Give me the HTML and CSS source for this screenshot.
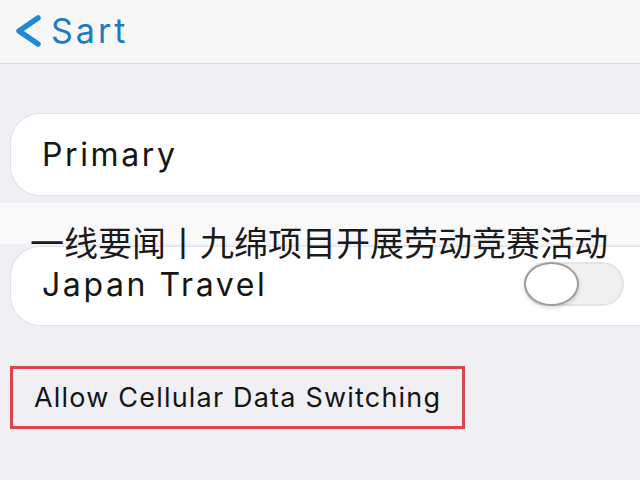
FILE: index.html
```html
<!DOCTYPE html>
<html lang="zh-CN">
<head>
  <meta charset="UTF-8">
  <meta name="viewport" content="width=device-width, initial-scale=1.0">
  <title>一线要闻丨九绵项目开展劳动竞赛活动</title>
  <link rel="stylesheet" href="styles.css">
</head>
<body>

  <!-- Navigation Bar -->
  <header class="nav-bar">
    <a class="back-link" href="#">
      <svg class="back-chevron" width="28" height="32" viewBox="0 0 28 32">
        <path d="M24 3 L5 16 L24 29" fill="none" stroke="#1e8ad6" stroke-width="5.5" stroke-linecap="round" stroke-linejoin="round"/>
      </svg>
      <span>Sart</span>
    </a>
  </header>

  <main class="settings">
    <!-- Line picker -->
    <div class="cell">
      <span class="cell-label">Primary</span>
    </div>

    <!-- Headline banner -->
    <div class="headline">
      <h1>一线要闻丨九绵项目开展劳动竞赛活动</h1>
    </div>

    <!-- Toggle row -->
    <div class="cell cell-toggle">
      <span class="cell-label">Japan Travel</span>
      <span class="switch"><span class="switch-knob"></span></span>
    </div>

    <!-- Highlighted option -->
    <div class="option-box">Allow Cellular Data Switching</div>
  </main>

</body>
</html>
```

FILE: styles.css
```css
/* Global Styles */
body {
  font-family: Inter, "Liberation Sans", sans-serif;
  background-color: #efeff4;
  color: #111;
  margin: 0;
  padding: 0;
  overflow: hidden;
}

/* Navigation Bar */
.nav-bar {
  height: 63px;
  background-color: #f7f7f7;
  border-bottom: 1px solid #dadada;
  display: flex;
  align-items: center;
  padding-left: 14px;
}

.back-link {
  display: flex;
  align-items: center;
  gap: 9px;
  text-decoration: none;
  color: #1b7dc0;
  font-size: 34px;
  letter-spacing: 3px;
  margin-top: -2px;
}

/* Cells */
.settings {
  display: flex;
  flex-direction: column;
}

.cell {
  margin-left: 10px;
  height: 83px;
  margin-top: 49px;
  background-color: #ffffff;
  border: 1px solid #e2e2e6;
  border-right: none;
  border-radius: 30px 0 0 30px;
  display: flex;
  align-items: center;
  padding-left: 31px;
  box-sizing: border-box;
}

.cell-label {
  font-size: 32px;
  letter-spacing: 2.6px;
  color: #151515;
}

.cell-toggle {
  margin-top: 2px;
  height: 80px;
  justify-content: space-between;
  padding-right: 16px;
  padding-bottom: 4px;
}

/* Switch */
.switch {
  width: 100px;
  height: 44px;
  border-radius: 22px;
  border: 2px solid #e4e4e4;
  background-color: #f0f0f0;
  box-sizing: border-box;
  display: flex;
  align-items: center;
}

.switch-knob {
  width: 55px;
  height: 44px;
  border-radius: 50%;
  background-color: #ffffff;
  border: 2px solid #9c9c9c;
  box-sizing: border-box;
  margin-left: -2px;
  box-shadow: 0 2px 4px rgba(0, 0, 0, 0.15);
}

/* Headline Banner */
.headline {
  margin-top: 7px;
  height: 41px;
  background-color: #f9f9f9;
}

.headline h1 {
  position: relative;
  z-index: 1;
  margin: 0;
  padding: 22px 0 0 30px;
  font-family: "Noto Sans CJK SC", sans-serif;
  font-weight: 400;
  font-size: 34px;
  line-height: 34px;
  color: #1a1a1a;
  white-space: nowrap;
}

/* Highlighted Option */
.option-box {
  margin: 40px 0 0 10px;
  width: 455px;
  height: 63px;
  border: 3px solid #d9474d;
  box-sizing: border-box;
  display: flex;
  align-items: center;
  padding-left: 21px;
  font-size: 27px;
  letter-spacing: 1.2px;
  color: #151515;
}
```
